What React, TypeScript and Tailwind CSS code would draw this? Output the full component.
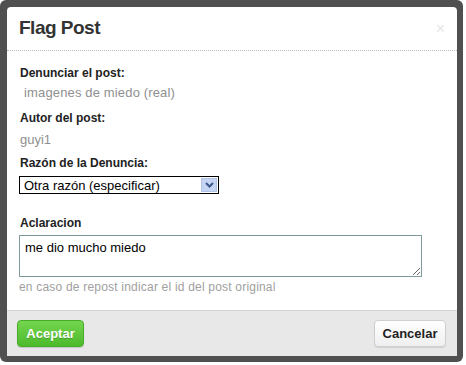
export default function App() {
  return (
    <div className="w-[466px] h-[365px] bg-white font-['Liberation_Sans',Arial,sans-serif]">
      <div className="w-[463px] h-[362px] rounded-[6px] bg-[#505050] pt-[7px] pl-[7px]">
        <div className="w-[450px] h-[349px] bg-white rounded-t-[4px] flex flex-col">
          {/* Header */}
          <div className="h-[44px] border-b border-dotted border-[#bdbdbd] flex items-center justify-between pl-[12px] pr-[12px]">
            <h1 className="text-[19px] font-bold text-[#333] tracking-[-0.5px]">Flag Post</h1>
            <span className="text-[16px] text-[#e6e6e6] leading-none">×</span>
          </div>

          {/* Body */}
          <div className="flex-1 flex flex-col pl-[13px] pt-[14px] text-[13px]">
            <div className="text-[12px] font-bold leading-[16px] text-[#222]">Denunciar el post:</div>
            <div className="mt-[3px] pl-[4px] leading-[18px] text-[#8f8f8f] tracking-[0.15px]">imagenes de miedo (real)</div>
            <div className="mt-[8px] text-[12px] font-bold leading-[16px] text-[#222]">Autor del post:</div>
            <div className="mt-[5px] leading-[18px] text-[#8f8f8f]">guyi1</div>
            <div className="mt-[6px] text-[12px] font-bold leading-[16px] text-[#222]">Razón de la Denuncia:</div>
            <div className="mt-[5px] -ml-[1px] w-[200px] h-[18px] border border-black bg-white flex items-center justify-between pl-[4px] pr-[1px]">
              <span className="text-[13px] leading-none text-black">Otra razón (especificar)</span>
              <span className="w-[16px] h-[14px] bg-[#c4d4f2] border border-[#b0c2e6] flex items-center justify-center">
                <svg width="9" height="6" viewBox="0 0 9 6">
                  <path d="M1 1 L4.5 4.5 L8 1" fill="none" stroke="#3c5788" strokeWidth="2" />
                </svg>
              </span>
            </div>
            <div className="mt-[21px] text-[12px] font-bold leading-[16px] text-[#222]">Aclaracion</div>
            <textarea
              readOnly
              defaultValue="me dio mucho miedo"
              className="mt-[4px] -ml-[1px] w-[403px] h-[42px] border border-[#7f9b9b] px-[5px] py-[4px] text-[13px] leading-[16px] text-black outline-none"
            />
            <div className="mt-[2px] -ml-[1px] text-[12px] leading-[16px] text-[#a0a0a0] tracking-[0.2px]">
              en caso de repost indicar el id del post original
            </div>
          </div>

          {/* Footer */}
          <div className="h-[46px] bg-[#e8e8e8] border-t border-[#d4d4d4] flex items-center justify-between pl-[10px] pr-[11px]">
            <button className="w-[67px] h-[27px] rounded-[4px] border border-[#46ab28] bg-gradient-to-b from-[#74d64e] to-[#4cba2b] text-white text-[13px] font-bold [text-shadow:0_1px_0_rgba(0,0,0,0.2)] shadow-[0_1px_1px_rgba(0,0,0,0.15)]">
              Aceptar
            </button>
            <button className="w-[72px] h-[27px] rounded-[4px] border border-[#cfcfcf] bg-gradient-to-b from-white to-[#efefef] text-[#222] text-[13px] font-bold shadow-[0_1px_1px_rgba(0,0,0,0.1)]">
              Cancelar
            </button>
          </div>
        </div>
      </div>
    </div>
  );
}
